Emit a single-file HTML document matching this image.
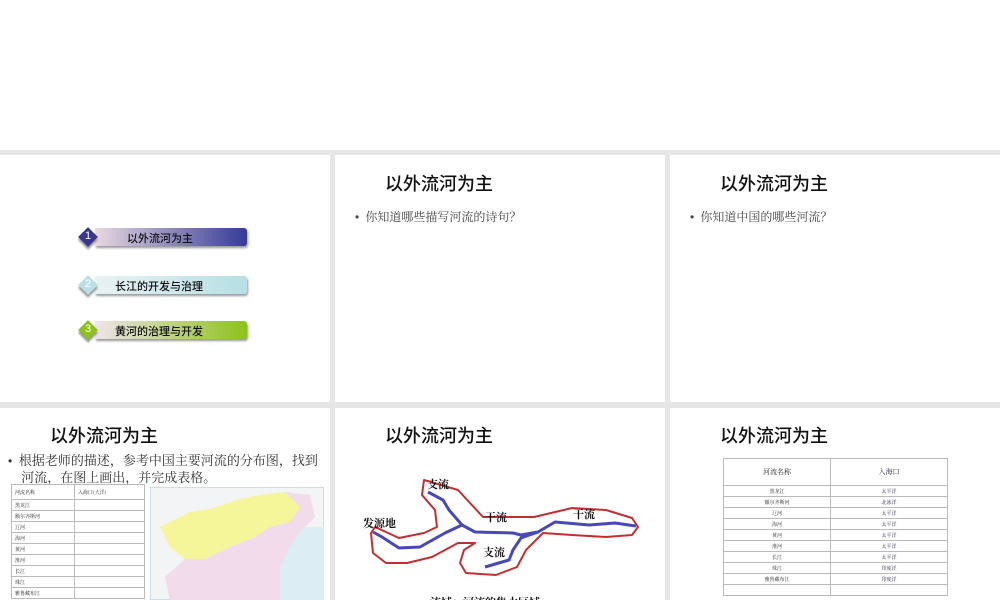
<!DOCTYPE html>
<html><head><meta charset="utf-8"><style>
body{margin:0;width:1000px;height:600px;background:#fff;position:relative;overflow:hidden;font-family:"Liberation Sans","Noto Sans CJK SC",sans-serif}
.bg{position:absolute;left:0;top:150px;width:1000px;height:450px;background:#e6e6e6}
.s{position:absolute;background:#fff;overflow:hidden}
.t{position:absolute;font-size:18px;font-weight:500;color:#111;font-family:"Noto Sans CJK SC",sans-serif;white-space:nowrap}
.b{position:absolute;font-size:12px;color:#444;white-space:nowrap;font-family:"Noto Serif CJK SC",serif}
.d{font-family:"Liberation Sans",sans-serif;font-size:12px}
.bar{position:absolute;left:95px;width:152px;height:18px;box-shadow:1px 2px 2px #999;border-radius:0 3px 3px 0}
.bar span{position:absolute;top:2px;font-size:11px;color:#111;font-weight:500;font-family:"Noto Sans CJK SC",sans-serif}
.dm{position:absolute;left:81px;width:14px;height:14px;transform:rotate(45deg);box-shadow:2px 2px 2px #999}
.n{position:absolute;left:85px;color:#fff;font-size:11px}
table{border-collapse:collapse;position:absolute;font-family:"Noto Serif CJK SC",serif}
td{border:1px solid #bbb;font-size:5px;padding:0 3px;height:10px;color:#222}
</style></head><body>
<div class="bg"></div>
<div class="s" style="left:0;top:155px;width:330px;height:247px">
 <div class="bar" style="top:73px;background:linear-gradient(90deg,#e8d8e0,#353b98)"><span style="left:32px">以外流河为主</span></div>
 <div class="dm" style="top:75px;background:#3b3590"></div><div class="n" style="top:75px">1</div>
 <div class="bar" style="top:121px;background:linear-gradient(90deg,#eaf2f4,#b6dfe4)"><span style="left:20px">长江的开发与治理</span></div>
 <div class="dm" style="top:123px;background:#b8e0e6"></div><div class="n" style="top:123px">2</div>
 <div class="bar" style="top:166px;background:linear-gradient(90deg,#f0e4ec,#8cc21a)"><span style="left:20px">黄河的治理与开发</span></div>
 <div class="dm" style="top:168px;background:#8cc21a"></div><div class="n" style="top:168px">3</div>
</div>
<div class="s" style="left:335px;top:155px;width:330px;height:247px">
 <div class="t" style="left:50px;top:15px">以外流河为主</div>
 <div class="b" style="left:20px;top:53px"><span class="d">•</span>&nbsp; 你知道哪些描写河流的诗句？</div>
</div>
<div class="s" style="left:670px;top:155px;width:330px;height:247px">
 <div class="t" style="left:50px;top:15px">以外流河为主</div>
 <div class="b" style="left:20px;top:53px"><span class="d">•</span>&nbsp; 你知道中国的哪些河流？</div>
</div>
<div class="s" style="left:0;top:408px;width:330px;height:192px">
 <div class="t" style="left:50px;top:14px">以外流河为主</div>
 <div class="b" style="left:8px;top:44px;font-size:13px;color:#333;line-height:15px"><span class="d">•</span>&nbsp; 根据老师的描述，参考中国主要河流的分布图，找到<br>&nbsp;&nbsp;&nbsp; 河流，在图上画出，并完成表格。</div>
 <table style="left:11px;top:76px;width:134px">
 <tr><td style="height:14px">河流名称</td><td>入海口(大洋)</td></tr>
 <tr><td>黑龙江</td><td></td></tr><tr><td>额尔齐斯河</td><td></td></tr><tr><td>辽河</td><td></td></tr><tr><td>海河</td><td></td></tr><tr><td>黄河</td><td></td></tr><tr><td>淮河</td><td></td></tr><tr><td>长江</td><td></td></tr><tr><td>珠江</td><td></td></tr><tr><td>雅鲁藏布江</td><td></td></tr></table>
 <svg style="position:absolute;left:150px;top:79px" width="174" height="113">
 <rect width="174" height="113" fill="#f2f4f5" stroke="#a8c8d8"/>
 <rect x="130" y="40" width="44" height="73" fill="#dceef4"/>
 <path d="M10 40 L40 25 L60 22 L90 12 L110 8 L135 5 L150 20 L140 35 L120 40 L105 50 L80 60 L55 72 L35 72 L20 60 Z" fill="#f5f59a"/>
 <path d="M135 5 L160 8 L165 30 L150 45 L140 60 L130 80 L130 113 L20 113 L15 90 L35 72 L55 72 L80 60 L105 50 L120 40 L140 35 L150 20 Z" fill="#f2dcec"/>
 </svg>
</div>
<div class="s" style="left:335px;top:408px;width:330px;height:192px">
 <div class="t" style="left:50px;top:14px">以外流河为主</div>
 <svg style="position:absolute;left:0;top:0" width="330" height="192">
 <path d="M89 72 L123 82 L148 109 L199 109 L237 100 L271 102 L297 110 L303 119 L297 127 L271 129 L237 127 L208 125 L191 142 L182 159 L161 167 L131 165 L125 155 L129 142 L140 135 L123 135 L97 149 L72 155 L51 155 L38 145 L36 125 L40 119 L51 124 L64 130 L89 125 L102 119 L100 102 L87 87 Z" fill="none" stroke="#c03030" stroke-width="2" stroke-linejoin="round"/>
 <path d="M38 124 L47 129 L64 140 L85 139 L110 125 L127 117 L140 124 L178 125 L186 127 L203 124 L220 114 L254 117 L280 115 L301 118" fill="none" stroke="#4848b8" stroke-width="3" stroke-linejoin="round"/>
 <path d="M93 84 L108 92 L114 102 L127 117" fill="none" stroke="#4848b8" stroke-width="3"/>
 <path d="M150 159 L174 152 L178 142 L186 130 L203 124" fill="none" stroke="#4848b8" stroke-width="3"/>
 <g font-size="11" font-weight="bold" font-family="Noto Serif CJK SC,serif" fill="#111">
 <text x="92" y="80">支流</text><text x="28" y="119">发源地</text><text x="150" y="113">干流</text><text x="238" y="110">干流</text><text x="148" y="148">支流</text>
 <text x="95" y="198">流域：河流的集水区域</text></g>
 </svg>
</div>
<div class="s" style="left:670px;top:408px;width:330px;height:192px">
 <div class="t" style="left:50px;top:14px">以外流河为主</div>
 <table style="left:53px;top:50px;width:225px;text-align:center">
 <tr><td style="height:26px;font-size:7px;width:100px">河流名称</td><td style="font-size:7px;color:#224">入海口</td></tr>
 <tr><td>黑龙江</td><td style="color:#224">太平洋</td></tr><tr><td>额尔齐斯河</td><td style="color:#224">北冰洋</td></tr><tr><td>辽河</td><td style="color:#224">太平洋</td></tr><tr><td>海河</td><td style="color:#224">太平洋</td></tr><tr><td>黄河</td><td style="color:#224">太平洋</td></tr><tr><td>淮河</td><td style="color:#224">太平洋</td></tr><tr><td>长江</td><td style="color:#224">太平洋</td></tr><tr><td>珠江</td><td style="color:#224">印度洋</td></tr><tr><td>雅鲁藏布江</td><td style="color:#224">印度洋</td></tr><tr><td></td><td></td></tr></table>
</div>
</body></html>
